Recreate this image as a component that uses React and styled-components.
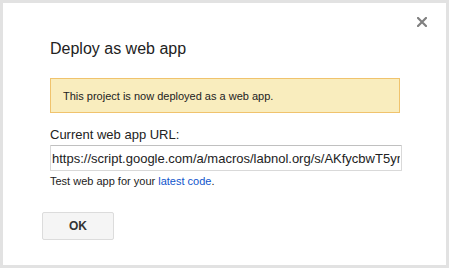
import React from 'react';
import styled, {createGlobalStyle} from 'styled-components';

const Global = createGlobalStyle`
    html, body {
        margin: 0;
        padding: 0;
        background: #ffffff;
    }
    body {
        font-family: Arial, "Liberation Sans", sans-serif;
        color: #222;
    }
`;

const Dialog = styled.div`
    position: relative;
    box-sizing: border-box;
    width: 449px;
    height: 268px;
    border: 3px solid #e2e2e2;
    background: #fff;
    padding: 36px 44px 0 47px;
    display: flex;
    flex-direction: column;
    align-items: flex-start;
`;

const Close = styled.button`
    position: absolute;
    top: 14px;
    right: 19px;
    width: 10px;
    height: 10px;
    padding: 0;
    border: 0;
    background: none;
    display: block;
    cursor: pointer;

    svg {
        display: block;
    }
`;

const Title = styled.h2`
    margin: 0;
    font-size: 16px;
    line-height: 20px;
    font-weight: normal;
    color: #222;
`;

const Notice = styled.div`
    box-sizing: border-box;
    width: 350px;
    margin-top: 19px;
    padding: 9px 12px 7px;
    font-size: 11px;
    line-height: 17px;
    color: #222;
    background: #f9edbe;
    border: 1px solid #f0c36d;
`;

const Label = styled.div`
    margin-top: 13px;
    font-size: 13px;
    line-height: 17px;
    color: #222;
`;

const UrlField = styled.input`
    box-sizing: border-box;
    width: 352px;
    height: 26px;
    margin: 2px 0 0;
    padding: 0 1px;
    font-family: Arial, "Liberation Sans", sans-serif;
    font-size: 13px;
    color: #222;
    background: #fff;
    border: 1px solid #d9d9d9;
    border-top-color: #c0c0c0;
    border-radius: 1px;
    outline: none;
`;

const Hint = styled.div`
    margin-top: 3px;
    font-size: 11px;
    line-height: 15px;
    color: #222;
`;

const Link = styled.a`
    color: #15c;
    text-decoration: none;
`;

const OkButton = styled.button`
    box-sizing: border-box;
    width: 72px;
    height: 28px;
    margin: 23px 0 0 -8px;
    padding: 0;
    font-family: Arial, "Liberation Sans", sans-serif;
    font-size: 12px;
    font-weight: bold;
    color: #333;
    background: #f5f5f5;
    border: 1px solid #dcdcdc;
    border-radius: 2px;
    cursor: pointer;
`;

export default function App() {
    return (
        <>
            <Global />
            <Dialog>
                <Close aria-label="Close">
                    <svg width="10" height="10" viewBox="0 0 10 10">
                        <path d="M1 1L9 9M9 1L1 9" stroke="#808080" strokeWidth="2.2" strokeLinecap="square" />
                    </svg>
                </Close>
                <Title>Deploy as web app</Title>
                <Notice>This project is now deployed as a web app.</Notice>
                <Label>Current web app URL:</Label>
                <UrlField
                    readOnly
                    value="https://script.google.com/a/macros/labnol.org/s/AKfycbwT5ynlOZbY0zL8mR/exec"
                />
                <Hint>
                    Test web app for your <Link href="#">latest code</Link>.
                </Hint>
                <OkButton>OK</OkButton>
            </Dialog>
        </>
    );
}
